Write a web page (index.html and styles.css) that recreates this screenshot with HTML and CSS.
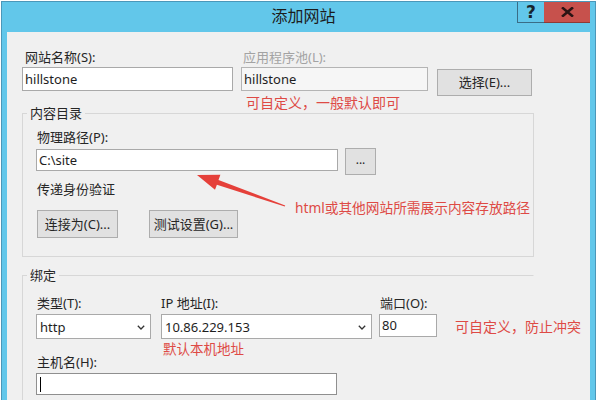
FILE: index.html
```html
<!DOCTYPE html>
<html lang="zh-CN">
<head>
<meta charset="utf-8">
<title>添加网站</title>
<link rel="stylesheet" href="styles.css">
</head>
<body>
<div class="page">
  <div class="window">
    <div class="titlebar">
      <div class="spacer"></div>
      <div class="title">添加网站</div>
      <div class="controls">
        <div class="btn-help">?</div>
        <div class="btn-close">
          <svg width="13" height="10" viewBox="0 0 13 10"><path d="M2 1.2 L11 8.8 M11 1.2 L2 8.8" stroke="#2b1414" stroke-width="2.6" stroke-linecap="square"/></svg>
        </div>
      </div>
    </div>
    <div class="client">
      <div class="top-grid">
        <div class="label">网站名称(S):</div>
        <div class="label disabled">应用程序池(L):</div>
        <div></div>
        <div class="field">hillstone</div>
        <div class="field readonly">hillstone</div>
        <div class="button btn-select">选择(E)...</div>
      </div>

      <fieldset class="group group-content">
        <legend>内容目录</legend>
        <div class="group-body">
          <div class="label">物理路径(P):</div>
          <div class="path-row">
            <div class="field path">C:\site</div>
            <div class="button btn-browse">...</div>
          </div>
          <div class="label auth">传递身份验证</div>
          <div class="btn-row">
            <div class="button btn-connect">连接为(C)...</div>
            <div class="button btn-test">测试设置(G)...</div>
          </div>
        </div>
      </fieldset>

      <fieldset class="group group-binding">
        <legend>绑定</legend>
        <div class="group-body">
          <div class="bind-grid">
            <div class="label">类型(T):</div>
            <div class="label">IP 地址(I):</div>
            <div class="label">端口(O):</div>
            <div class="select sel-type"><span>http</span><svg width="8" height="5" viewBox="0 0 8 5"><path d="M0.8 0.8 L4 4 L7.2 0.8" fill="none" stroke="#333" stroke-width="1.3"/></svg></div>
            <div class="select sel-ip"><span>10.86.229.153</span><svg width="8" height="5" viewBox="0 0 8 5"><path d="M0.8 0.8 L4 4 L7.2 0.8" fill="none" stroke="#333" stroke-width="1.3"/></svg></div>
            <div class="field port">80</div>
          </div>
          <div class="label host">主机名(H):</div>
          <div class="field hostname"><span class="caret"></span></div>
        </div>
      </fieldset>
    </div>
  </div>

  <div class="note note-pool">可自定义，一般默认即可</div>
  <div class="note note-path">html或其他网站所需展示内容存放路径</div>
  <div class="note note-port">可自定义，防止冲突</div>
  <div class="note note-ip">默认本机地址</div>
  <svg class="arrow" width="600" height="400" viewBox="0 0 600 400">
    <polygon points="197,175 220.4,174.8 218.5,179.9 285.2,205.4 284.8,206.6 216.9,184.7 215,189.8" fill="#e5403a"/>
  </svg>
</div>
</body>
</html>
```

FILE: styles.css
```css
* { box-sizing: border-box; }

html, body {
  margin: 0;
  padding: 0;
  background: #ffffff;
}

body {
  font-family: "Noto Sans", "Noto Sans CJK SC", sans-serif;
  font-size: 13px;
  color: #222222;
}

.page {
  position: relative;
  width: 600px;
  height: 400px;
  overflow: hidden;
}

.window {
  margin: 1px 0 0 1px;
  width: 595px;
  height: 420px;
  background: #62c7ea;
  border: 1px solid #4b97b9;
  border-bottom: none;
}

.titlebar {
  height: 30px;
  display: grid;
  grid-template-columns: 1fr auto 1fr;
  align-items: start;
}

.title {
  font-size: 16px;
  line-height: 29px;
  color: #1c1c1c;
  padding-left: 10px;
}

.controls {
  justify-self: end;
  display: flex;
  margin-right: 5px;
}

.btn-help {
  width: 27px;
  height: 21px;
  border-left: 1px solid #3a6d86;
  border-bottom: 1px solid #3a6d86;
  font-family: "DejaVu Sans", sans-serif;
  font-weight: bold;
  font-size: 17px;
  line-height: 20px;
  text-align: center;
  color: #17242c;
}

.btn-close {
  width: 46px;
  height: 21px;
  background: #c7514c;
  border-bottom: 1px solid #8e3a36;
  display: flex;
  align-items: center;
  justify-content: center;
}

.client {
  margin: 0 5px;
  height: 380px;
  background: #f0f0f0;
  padding: 17px 0 0 15px;
}

.label {
  line-height: 16px;
  padding-left: 3px;
  white-space: nowrap;
  color: #262626;
}

.label.disabled {
  color: #a3a3a3;
  padding-left: 2px;
}

.field {
  height: 24px;
  background: #ffffff;
  border: 1px solid #a9a9a9;
  padding-left: 2px;
  line-height: 22px;
  white-space: nowrap;
  color: #1e1e1e;
}

.field.readonly {
  background: #f6f6f6;
  border-color: #b4b4b4;
}

.button {
  background: #e1e1e1;
  border: 1px solid #adadad;
  text-align: center;
  color: #262626;
  white-space: nowrap;
}

.top-grid {
  display: grid;
  grid-template-columns: 211px 187px 96px;
  column-gap: 8px;
  row-gap: 2px;
  align-items: start;
}

.btn-select {
  height: 27px;
  margin: 2px 0 0 1px;
  line-height: 25px;
  width: 95px;
}

.group {
  margin: 0;
  width: 512px;
  border: 1px solid #d7d7d7;
  padding: 0 0 0 4px;
  min-width: 0;
}

.group legend {
  padding: 0 3px;
  line-height: 16px;
  color: #262626;
}

.group-content {
  margin-top: 9px;
}

.group-binding {
  margin-top: 10px;
  border-right-color: transparent;
  height: 200px;
}

.group-body {
  padding: 8px 0 18px 9px;
}

.group-body .label {
  padding-left: 1px;
}

.path-row {
  display: flex;
  align-items: flex-start;
  margin-top: 3px;
}

.field.path {
  width: 302px;
  height: 22px;
  margin-top: 1px;
  line-height: 20px;
}

.btn-browse {
  width: 31px;
  height: 27px;
  margin-left: 7px;
  line-height: 22px;
  font-size: 12px;
}

.label.auth {
  margin-top: 6px;
}

.btn-row {
  display: flex;
  gap: 31px;
  margin-top: 13px;
  padding-left: 1px;
}

.btn-row .button {
  height: 28px;
  line-height: 26px;
}

.btn-connect { width: 81px; }
.btn-test { width: 89px; }

.group-binding .group-body {
  padding-top: 12px;
}

.bind-grid {
  display: grid;
  grid-template-columns: 125px 218px 58px;
  row-gap: 3px;
  align-items: start;
}

.bind-grid .label:nth-child(2) {
  margin-left: -1px;
}

.select {
  height: 25px;
  background: #ffffff;
  border: 1px solid #a9a9a9;
  display: flex;
  align-items: center;
  justify-content: space-between;
  padding: 0 5px 0 3px;
  color: #1e1e1e;
}

.select svg { margin-top: 1px; }

.sel-type { width: 115px; }
.sel-ip { width: 211px; }

.field.port {
  width: 58px;
  height: 23px;
  line-height: 21px;
}

.label.host {
  margin-top: 15px;
}

.field.hostname {
  width: 301px;
  height: 22px;
  margin-top: 3px;
  display: flex;
  align-items: center;
  padding-left: 3px;
  border-color: #8f8f8f;
}

.caret {
  display: block;
  width: 1px;
  height: 15px;
  background: #000000;
}

.note {
  position: absolute;
  font-size: 14px;
  line-height: 18px;
  color: #de4a45;
  white-space: nowrap;
}

.note-pool { left: 246px; top: 94px; }
.note-path { left: 295px; top: 199px; font-size: 13.7px; }
.note-port { left: 455px; top: 318px; }
.note-ip { left: 163px; top: 340px; font-size: 13.5px; }

.arrow {
  position: absolute;
  left: 0;
  top: 0;
  pointer-events: none;
}
```
